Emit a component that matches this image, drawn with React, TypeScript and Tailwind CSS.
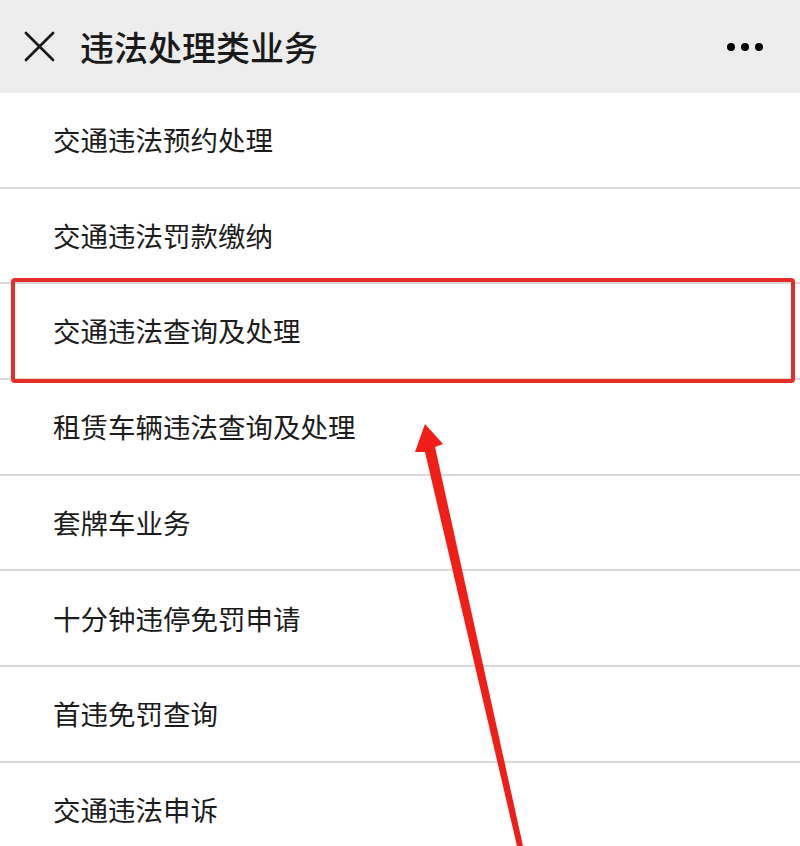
import React from 'react';

const items = [
  '交通违法预约处理',
  '交通违法罚款缴纳',
  '交通违法查询及处理',
  '租赁车辆违法查询及处理',
  '套牌车业务',
  '十分钟违停免罚申请',
  '首违免罚查询',
  '交通违法申诉',
];

const App = () => {
  return (
    <div
      className="relative w-[800px] h-[846px] overflow-hidden bg-white"
      style={{ fontFamily: '"Noto Sans CJK SC", "Noto Sans", sans-serif' }}
    >
      {/* Header */}
      <div className="flex items-center h-[93px] bg-[#ededed]">
        <div className="flex items-center justify-center w-[80px] h-full">
          <svg width="31" height="31" viewBox="0 0 32 32" className="ml-[-2px]">
            <path d="M2 2 L30 30 M30 2 L2 30" stroke="#1a1a1a" strokeWidth="2.8" strokeLinecap="round" />
          </svg>
        </div>
        <h1 className="text-[34px] font-medium text-[#1a1a1a] leading-none">
          违法处理类业务
        </h1>
        <div className="ml-auto mr-[37px] flex items-center gap-[6px]">
          <span className="w-[8px] h-[8px] rounded-full bg-black" />
          <span className="w-[8px] h-[8px] rounded-full bg-black" />
          <span className="w-[8px] h-[8px] rounded-full bg-black" />
        </div>
      </div>

      {/* List */}
      <div className="flex flex-col">
        {items.map((label) => (
          <div
            key={label}
            className="flex items-center h-[95.7px] shrink-0 border-b-2 border-[#d9d9d9] pl-[53px]"
          >
            <span className="text-[27.5px] text-[#1c1c1c] leading-none">{label}</span>
          </div>
        ))}
      </div>

      {/* Highlight box */}
      <div className="absolute left-[11px] top-[278px] w-[784px] h-[105px] border-[4px] border-[#e62e26] rounded-[4px]" />

      {/* Annotation arrow */}
      <svg className="absolute inset-0 pointer-events-none" width="800" height="846" viewBox="0 0 800 846">
        <polygon
          points="425,424 443,444 435,447 523,846 517,846 425,452 415,452"
          fill="#f01e16"
        />
      </svg>
    </div>
  );
};

export default App;
